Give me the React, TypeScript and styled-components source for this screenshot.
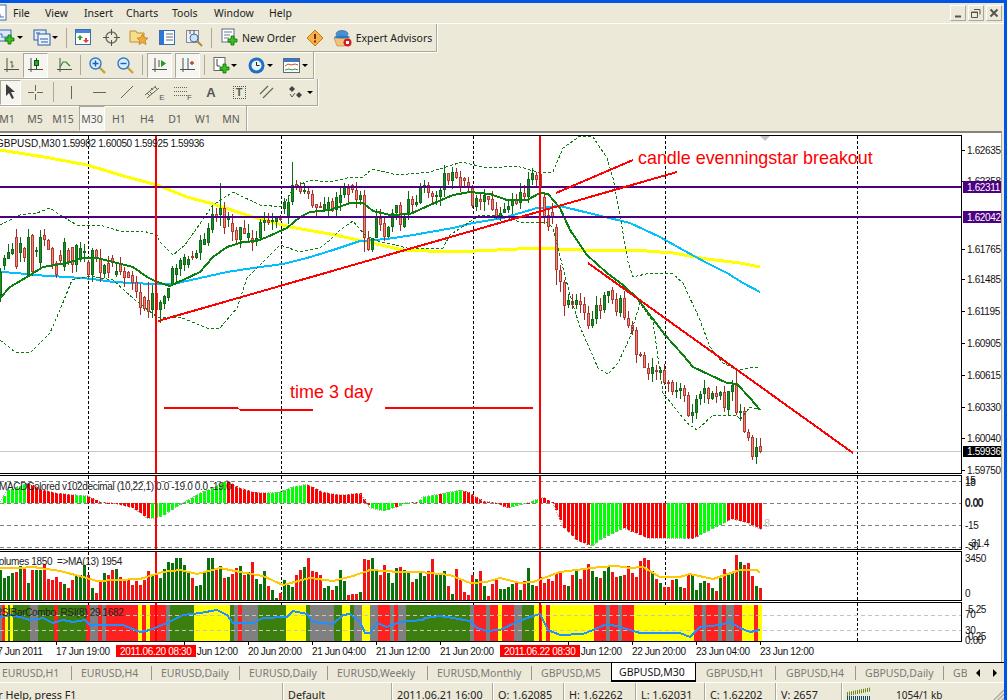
import React from "react";
import styled, { createGlobalStyle } from "styled-components";

const Global = createGlobalStyle`
  html, body {
    margin: 0;
    padding: 0;
    background: #ece9d8;
    overflow: hidden;
  }
`;

const UI_FONT = `"Noto Sans", "Liberation Sans", sans-serif`;
const CHART_FONT = `"Liberation Sans", Arial, sans-serif`;

const Frame = styled.div`
  width: 1007px;
  height: 700px;
  box-sizing: border-box;
  border-top: 3px solid #0055e5;
  border-right: 3px solid #0055e5;
  background: #ece9d8;
  display: flex;
  flex-direction: column;
  overflow: hidden;
  font-family: ${UI_FONT};
  font-size: 10.5px;
  color: #222;
`;

/* menu */
const MenuBar = styled.div`
  height: 20px;
  flex: none;
  display: flex;
  align-items: center;
  border-bottom: 1px solid #fff;
`;
const AppIcon = styled.div`
  width: 13px;
  height: 18px;
  overflow: hidden;
`;
const MenuItem = styled.div<{ $w: number }>`
  width: ${(p) => p.$w}px;
  font-size: 10.5px;
`;
const WindowButtons = styled.div`
  margin-left: auto;
  margin-right: 2px;
  display: flex;
  gap: 2px;
`;
const WindowButton = styled.div`
  width: 16px;
  height: 16px;
  box-sizing: border-box;
  border: 1px solid;
  border-color: #fff #aca899 #aca899 #fff;
  display: flex;
  align-items: center;
  justify-content: center;
`;

/* toolbars */
const ToolbarStack = styled.div`
  flex: none;
  display: flex;
  flex-direction: column;
`;
const Toolbar = styled.div<{ $w: number; $h: number; $last?: boolean }>`
  width: ${(p) => p.$w}px;
  height: ${(p) => p.$h}px;
  box-sizing: border-box;
  display: flex;
  align-items: center;
  border-right: 1px solid #aca899;
  border-bottom: ${(p) => (p.$last ? "0" : "1px solid #aca899")};
  box-shadow: 1px 0 0 #fff, ${(p) => (p.$last ? "0 0 0 transparent" : "0 1px 0 #fff")};
`;
const ToolButton = styled.div<{ $w: number; $ml?: number; $pressed?: boolean }>`
  width: ${(p) => p.$w}px;
  height: 25px;
  margin-left: ${(p) => p.$ml || 0}px;
  flex: none;
  box-sizing: border-box;
  display: flex;
  align-items: center;
  justify-content: center;
  ${(p) =>
    p.$pressed
      ? `background: #f6f5ef; border: 1px solid; border-color: #aca899 #fff #fff #aca899;`
      : ""}
`;
const Separator = styled.div<{ $ml: number }>`
  width: 1px;
  height: 20px;
  flex: none;
  margin-left: ${(p) => p.$ml}px;
  background: #aca899;
`;
const Caret = styled.div<{ $ml?: number }>`
  flex: none;
  width: 0;
  height: 0;
  margin-left: ${(p) => (p.$ml || 0) + 1}px;
  margin-right: 1px;
  border-left: 3px solid transparent;
  border-right: 3px solid transparent;
  border-top: 3px solid #000;
`;
const ToolText = styled.span`
  margin-left: 4px;
  font-size: 10.5px;
  white-space: nowrap;
`;
const TextButton = styled.div<{ $ml: number }>`
  display: flex;
  align-items: center;
  flex: none;
  margin-left: ${(p) => p.$ml}px;
`;
const Glyph = styled.span<{ $size: number; $weight?: number; $sub?: boolean }>`
  font-family: ${CHART_FONT};
  font-size: ${(p) => p.$size}px;
  font-weight: ${(p) => p.$weight || 400};
  color: #555;
  align-self: ${(p) => (p.$sub ? "flex-end" : "auto")};
  margin-bottom: ${(p) => (p.$sub ? "3px" : "0")};
`;
const TimeframeText = styled.span`
  color: #5c5c5c;
  font-size: 10.5px;
`;

/* chart */
const ChartBoard = styled.div`
  flex: none;
  width: 1002px;
  height: 531px;
  box-sizing: border-box;
  border-top: 2px solid #85837a;
  border-right: 1px solid #aca899;
  background: #fff;
  padding-top: 2px;
  display: flex;
  flex-direction: column;
`;
const Pane = styled.div<{ $mb?: number }>`
  display: flex;
  flex: none;
  margin-bottom: ${(p) => p.$mb || 0}px;
`;
const Plot = styled.div`
  width: 962px;
  box-sizing: border-box;
  border: 1px solid #000;
  border-left: 0;
  flex: none;
  display: flex;
`;
const ChartSvg = styled.svg`
  display: block;
  overflow: visible;
  font-family: ${CHART_FONT};
  font-size: 10px;
  letter-spacing: -0.35px;
  & polyline,
  & line,
  & rect {
    shape-rendering: crispEdges;
  }
`;

/* tabs */
const TabStrip = styled.div`
  flex: none;
  height: 20px;
  box-sizing: border-box;
  border-top: 1px solid #000;
  display: flex;
  align-items: center;
  position: relative;
`;
const Tab = styled.div<{ $w: number; $pad?: number; $active?: boolean }>`
  width: ${(p) => p.$w}px;
  flex: none;
  box-sizing: border-box;
  overflow: hidden;
  white-space: nowrap;
  color: ${(p) => (p.$active ? "#111" : "#7a7a7a")};
  ${(p) =>
    p.$active
      ? `background: #fff; height: 19px; line-height: 18px; margin-top: 0; align-self: flex-start;
         border: 1px solid #000; border-top: 0; border-bottom: 2px solid #000; padding-left: 7px;`
      : `height: 14px; line-height: 14px; padding-left: ${p.$pad ?? 9}px;`}
`;
const TabEdge = styled(Tab)`
  border-right: 1px solid #9a9890;
`;
const TabArrows = styled.div`
  margin-left: auto;
  margin-right: 7px;
  display: flex;
  gap: 13px;
`;
const ArrowLeft = styled.div`
  width: 0;
  height: 0;
  border-top: 4px solid transparent;
  border-bottom: 4px solid transparent;
  border-right: 4px solid #000;
`;
const ArrowRight = styled(ArrowLeft)`
  border-right: 0;
  border-left: 4px solid #000;
`;

/* status */
const StatusBar = styled.div`
  flex: none;
  height: 19px;
  box-sizing: border-box;
  border-top: 1px solid #fff;
  display: flex;
  align-items: flex-start;
  position: relative;
  font-size: 10.8px;
`;
const StatusCell = styled.div<{ $w: number; $flush?: boolean }>`
  width: ${(p) => p.$w}px;
  height: 18px;
  padding-top: 4px;
  padding-left: ${(p) => (p.$flush ? 0 : 5)}px;
  flex: none;
  box-sizing: border-box;
  line-height: 16px;
  white-space: nowrap;
  overflow: hidden;
  border-right: 1px solid #aca899;
  box-shadow: 1px 0 0 #fff;
`;
const ClippedText = styled.span`
  margin-left: -14px;
`;
const ConnectionBars = styled.div`
  width: 25px;
  height: 14px;
  margin: 4px 24px 0 5px;
  flex: none;
  display: flex;
`;
const KbText = styled.div`
  padding-top: 4px;
  line-height: 16px;
  font-size: 10px;
`;
const Grip = styled.svg`
  position: absolute;
  right: 0;
  bottom: 0;
`;

/* icons */
const Ico = styled.svg`
  display: block;
  flex: none;
  overflow: visible;
`;

const Plus = ({ x, y }: { x: number; y: number }) => (
  <path
    d={`M${x + 3} ${y}h3v3h3v3h-3v3h-3v-3h-3v-3h3z`}
    fill="#39c11a"
    stroke="#0c6b0c"
    strokeWidth="0.8"
  />
);

const Doc = ({ x = 1, y = 0 }: { x?: number; y?: number }) => (
  <g>
    <rect x={x} y={y} width="12" height="13" fill="#fff" stroke="#5a6a80" />
    <path d={`M${x + 2} ${y + 3}h8M${x + 2} ${y + 6}h6M${x + 2} ${y + 9}h5`} stroke="#6a7a90" />
  </g>
);

const NewChartIcon = () => (
  <Ico width="17" height="17" viewBox="0 0 17 17">
    <rect x="-3" y="1" width="14" height="11" fill="#dbe8fb" stroke="#3a6db0" />
    <path d="M-1 5h3v4M3 8h5" stroke="#3a6db0" fill="none" />
    <Plus x={5} y={6} />
  </Ico>
);
const ProfilesIcon = () => (
  <Ico width="18" height="17" viewBox="0 0 18 17">
    <rect x="1" y="1" width="12" height="10" fill="#e2edfb" stroke="#2d5c9e" />
    <rect x="5" y="5" width="12" height="11" fill="#eef4fd" stroke="#2d5c9e" />
    <path d="M3 4h4M7 10h8M8 13h7" stroke="#2d5c9e" />
  </Ico>
);
const MarketWatchIcon = () => (
  <Ico width="17" height="17" viewBox="0 0 17 17">
    <rect x="0.5" y="0.5" width="15" height="15" fill="#fff" stroke="#3a6db0" />
    <rect x="1" y="1" width="14" height="3" fill="#4a86d8" />
    <path d="M5 6l3 3h-2v2h-2v-2h-2z" fill="#2aa52a" />
    <path d="M11 14l-3-3h2v-2h2v2h2z" fill="#e2402a" />
  </Ico>
);
const CrosshairIcon = () => (
  <Ico width="17" height="17" viewBox="0 0 17 17">
    <circle cx="8.5" cy="8.5" r="5.5" fill="none" stroke="#6e6e66" strokeWidth="1.4" />
    <path d="M8.5 0v6M8.5 11v6M0 8.5h6M11 8.5h6" stroke="#55554e" />
  </Ico>
);
const FolderStarIcon = () => (
  <Ico width="19" height="17" viewBox="0 0 19 17">
    <path d="M0 2h6l1 2h7v9H0z" fill="#f8dd8c" stroke="#b6923a" />
    <path d="M12.5 5l1.7 3.6 3.8.5-2.8 2.6.8 3.8-3.5-1.9-3.5 1.9.8-3.8-2.8-2.6 3.8-.5z" fill="#f2a93c" stroke="#b47a1c" strokeWidth="0.7" />
  </Ico>
);
const NavigatorIcon = () => (
  <Ico width="16" height="16" viewBox="0 0 16 16">
    <rect x="0.5" y="0.5" width="15" height="14" fill="#fff" stroke="#3a6db0" />
    <rect x="1" y="1" width="4" height="13" fill="#2a78d8" />
    <path d="M7 4h7M7 7h7M7 10h7" stroke="#5a6a80" />
  </Ico>
);
const TesterIcon = () => (
  <Ico width="18" height="18" viewBox="0 0 18 18">
    <rect x="0.5" y="1.5" width="12" height="12" fill="#eef0f4" stroke="#8a8a94" />
    <circle cx="8" cy="9" r="4" fill="#cfe2fa" stroke="#3a6db0" />
    <path d="M11 12l5 5" stroke="#b08a3a" strokeWidth="2" />
    <path d="M4 1v4M8 1v4" stroke="#555" />
  </Ico>
);
const NewOrderIcon = () => (
  <Ico width="17" height="17" viewBox="0 0 17 17">
    <Doc x={1} y={0} />
    <Plus x={7} y={7} />
  </Ico>
);
const WarningIcon = () => (
  <Ico width="16" height="16" viewBox="0 0 16 16">
    <path d="M8 0l8 8-8 8-8-8z" fill="#f6b04a" stroke="#c67a1a" />
    <path d="M7 4h2v5H7zM7 10.5h2v2H7z" fill="#7a2a10" />
  </Ico>
);
const ExpertIcon = () => (
  <Ico width="18" height="18" viewBox="0 0 18 18">
    <path d="M0 9h15l1 5-6 3H3z" fill="#f3c27a" stroke="#b08040" strokeWidth="0.6" />
    <ellipse cx="8" cy="5" rx="6" ry="3.5" fill="#4a90cf" stroke="#2a5d8f" strokeWidth="0.6" />
    <ellipse cx="8" cy="8" rx="8" ry="1.5" fill="#2a78c8" />
    <circle cx="13.5" cy="13.5" r="4" fill="#d81f1f" />
    <rect x="12" y="12" width="3" height="3" fill="#fff" />
  </Ico>
);
const Axes = () => <path d="M3 0v14M0 11.5h15" stroke="#50504a" fill="none" />;
const BarChartIcon = () => (
  <Ico width="15" height="15" viewBox="0 0 15 15">
    <Axes />
    <path d="M8 3v7M6 4h2M8 8h2" stroke="#5c6b3a" fill="none" />
  </Ico>
);
const CandleIcon = () => (
  <Ico width="15" height="15" viewBox="0 0 15 15">
    <Axes />
    <path d="M8.5 0v11" stroke="#0c5a0c" />
    <rect x="6.5" y="2.5" width="4" height="5" fill="#2aa52a" stroke="#0c5a0c" />
  </Ico>
);
const LineIcon = () => (
  <Ico width="15" height="15" viewBox="0 0 15 15">
    <Axes />
    <path d="M3 9l3-5h3l4 4" stroke="#2a8a2a" strokeWidth="1.2" fill="none" />
  </Ico>
);
const ZoomIcon = ({ plus }: { plus?: boolean }) => (
  <Ico width="17" height="17" viewBox="0 0 17 17">
    <path d="M10 10l6 6" stroke="#c8a23a" strokeWidth="2.4" />
    <circle cx="6.5" cy="6.5" r="5.5" fill="#d6ebff" stroke="#2f7bc8" strokeWidth="1.4" />
    <path d={plus ? "M3.5 6.5h6M6.5 3.5v6" : "M3.5 6.5h6"} stroke="#1f5fa8" strokeWidth="1.4" />
  </Ico>
);
const AutoScrollIcon = () => (
  <Ico width="15" height="15" viewBox="0 0 15 15">
    <Axes />
    <path d="M7 2v7" stroke="#50504a" />
    <path d="M9 2l5 3.5L9 9z" fill="#1f9a1f" />
  </Ico>
);
const ShiftIcon = () => (
  <Ico width="15" height="15" viewBox="0 0 15 15">
    <Axes />
    <path d="M8 0v11" stroke="#1f5fa8" />
    <path d="M10 5h4M12 3v4" stroke="#b8401f" strokeWidth="1.4" />
  </Ico>
);
const IndicatorIcon = () => (
  <Ico width="17" height="17" viewBox="0 0 17 17">
    <rect x="1" y="0.5" width="11" height="13" fill="#fff" stroke="#6a6a62" />
    <path d="M4 2v7h3" stroke="#444" fill="none" />
    <Plus x={7} y={7} />
  </Ico>
);
const ClockIcon = () => (
  <Ico width="17" height="17" viewBox="0 0 17 17">
    <circle cx="8.5" cy="8.5" r="8" fill="#1f6fc8" />
    <circle cx="8.5" cy="8.5" r="5" fill="#eef4fb" />
    <path d="M8.5 5v3.5h3" stroke="#222" fill="none" />
  </Ico>
);
const TemplateIcon = () => (
  <Ico width="17" height="15" viewBox="0 0 17 15">
    <rect x="0.5" y="0.5" width="16" height="14" fill="#fff" stroke="#5a6a80" />
    <rect x="1" y="1" width="15" height="3" fill="#3a78c8" />
    <path d="M2 8l3-2 3 1 4-1 3 1" stroke="#d04a2a" fill="none" />
    <path d="M2 12l4-1 3 1 3-1 3 1" stroke="#2a9a2a" fill="none" />
  </Ico>
);
const CursorIcon = () => (
  <Ico width="12" height="16" viewBox="0 0 12 16">
    <path d="M1 0l9 8H6l3 6-2 1-3-6-3 3z" fill="#3c3c3c" />
  </Ico>
);
const draw = "#66665e";
const CrossIcon = () => (
  <Ico width="15" height="15" viewBox="0 0 15 15">
    <path d="M7.5 0v6M7.5 9v6M0 7.5h6M9 7.5h6" stroke={draw} />
  </Ico>
);
const VLineIcon = () => (
  <Ico width="3" height="13" viewBox="0 0 3 13">
    <path d="M1.5 0v13" stroke={draw} />
  </Ico>
);
const HLineIcon = () => (
  <Ico width="13" height="3" viewBox="0 0 13 3">
    <path d="M0 1.5h13" stroke={draw} />
  </Ico>
);
const TrendIcon = () => (
  <Ico width="14" height="14" viewBox="0 0 14 14">
    <path d="M1 13L13 1" stroke={draw} />
  </Ico>
);
const ChannelIcon = () => (
  <Ico width="14" height="15" viewBox="0 0 14 15">
    <path d="M0 10L11 1M2 13L14 3M6 3l2 2M4 6l3 3M2 8l3 3M10 2l2 2" stroke={draw} fill="none" />
  </Ico>
);
const FiboIcon = () => (
  <Ico width="13" height="13" viewBox="0 0 13 13">
    <path d="M0 1.5h13M0 5.5h13M0 9.5h13" stroke={draw} strokeDasharray="1 1" />
  </Ico>
);
const ParallelIcon = () => (
  <Ico width="14" height="14" viewBox="0 0 14 14">
    <path d="M0 9L8 1M3 13L13 3" stroke={draw} strokeWidth="1.2" />
  </Ico>
);
const ArrowsIcon = () => (
  <Ico width="15" height="15" viewBox="0 0 15 15">
    <path d="M4 1l3 3-3 3-3-3z" fill="#444" />
    <path d="M11 7l3 3-3 3-3-3z" fill="#444" />
    <path d="M2 9l2 3 3-4" stroke="#555" fill="none" />
  </Ico>
);
const TextBoxIcon = styled.div`
  width: 11px;
  height: 11px;
  border: 1px dotted #555;
  display: flex;
  align-items: center;
  justify-content: center;
`;

/* chart data */
type Path = number[][];

const at = (path: Path, x: number) => {
  if (x <= path[0][0]) return path[0][1];
  for (let i = 1; i < path.length; i++) {
    if (x <= path[i][0]) {
      const [x0, y0] = path[i - 1];
      const [x1, y1] = path[i];
      return y0 + ((y1 - y0) * (x - x0)) / (x1 - x0);
    }
  }
  return path[path.length - 1][1];
};
const noise = (i: number, s: number) => {
  const v = Math.sin(i * 12.9898 + s * 78.233) * 43758.5453;
  return v - Math.floor(v);
};
const pts = (p: Path) => p.map((q) => q.join(",")).join(" ");

const BARS: number[] = [];
for (let x = -4; x <= 760; x += 4) BARS.push(x);

const PRICE: Path = [
  [0, 268], [10, 252], [20, 248], [30, 255], [40, 248], [50, 248], [60, 258], [70, 255], [85, 252], [100, 252],
  [110, 258], [120, 268], [136, 282], [140, 302], [150, 305], [156, 302], [162, 305], [170, 285], [180, 265],
  [190, 262], [200, 248], [210, 232], [220, 212], [232, 225], [240, 233], [252, 238], [262, 228], [275, 222],
  [290, 195], [300, 190], [310, 198], [320, 208], [336, 205], [345, 192], [355, 190], [362, 205], [375, 248],
  [380, 238], [385, 225], [400, 215], [405, 205], [415, 192], [430, 198], [445, 178], [455, 175], [465, 190],
  [475, 187], [495, 202], [502, 213], [515, 208], [530, 195], [535, 177], [545, 185], [548, 202], [553, 218],
  [557, 248], [561, 275], [565, 292], [570, 303], [580, 302], [585, 308], [590, 320], [595, 312], [605, 298],
  [612, 295], [620, 305], [625, 305], [632, 322], [637, 343], [644, 363], [650, 370], [660, 372], [665, 377],
  [672, 387], [680, 390], [685, 400], [692, 407], [697, 397], [705, 392], [712, 395], [720, 393], [727, 400],
  [737, 400], [742, 413], [746, 422], [750, 435], [753, 447], [757, 452], [760, 449],
];

type Candle = { h: number; o: number; c: number; l: number };
const CANDLE_FIX: Record<number, Candle> = {
  148: { h: 282, o: 300, c: 312, l: 318 },
  152: { h: 285, o: 310, c: 293, l: 318 },
  156: { h: 288, o: 293, c: 310, l: 322 },
  160: { h: 300, o: 310, c: 302, l: 323 },
  220: { h: 183, o: 215, c: 208, l: 226 },
  292: { h: 162, o: 202, c: 185, l: 205 },
  364: { h: 190, o: 195, c: 238, l: 252 },
  556: { h: 224, o: 227, c: 270, l: 285 },
  560: { h: 265, o: 270, c: 282, l: 292 },
  564: { h: 280, o: 282, c: 306, l: 316 },
  636: { h: 327, o: 330, c: 355, l: 363 },
  736: { h: 370, o: 385, c: 413, l: 415 },
  752: { h: 435, o: 437, c: 457, l: 460 },
  756: { h: 438, o: 457, c: 447, l: 464 },
  760: { h: 438, o: 446, c: 452, l: 453 },
};

/* x, body top, body bottom, 1 = falling bar */
const BODIES: number[][] = [
  [0, 272, 295, 0], [16, 237, 267, 1], [24, 248, 258, 1], [28, 237, 275, 0], [32, 235, 272, 1], [40, 237, 263, 0],
  [44, 235, 240, 1], [48, 240, 250, 1], [52, 248, 265, 1], [56, 263, 275, 1], [64, 242, 267, 0], [72, 247, 265, 1],
  [76, 245, 265, 0], [88, 262, 275, 1], [92, 250, 275, 0], [96, 250, 258, 1], [100, 258, 273, 1], [104, 265, 274, 0],
  [108, 263, 273, 1], [116, 271, 275, 0], [124, 271, 278, 1], [136, 282, 292, 1], [140, 292, 308, 1], [168, 288, 298, 0],
  [172, 268, 285, 0], [176, 268, 275, 0], [184, 257, 265, 0], [192, 256, 258, 1], [196, 253, 258, 0], [200, 240, 253, 0],
  [208, 228, 243, 0], [212, 214, 230, 0], [216, 214, 217, 1], [224, 208, 228, 1], [228, 217, 220, 0], [232, 223, 232, 1],
  [236, 230, 240, 1], [240, 227, 240, 0], [244, 228, 234, 1], [248, 233, 238, 0], [252, 238, 243, 1], [256, 238, 241, 0],
  [260, 222, 238, 0], [264, 220, 223, 0], [268, 220, 223, 1], [272, 220, 222, 0], [276, 217, 222, 0], [280, 218, 220, 1],
  [288, 202, 217, 0], [296, 184, 188, 1], [300, 187, 192, 1], [304, 190, 192, 0], [308, 191, 194, 1], [312, 194, 206, 1],
  [316, 204, 208, 1], [320, 206, 208, 1], [336, 197, 210, 0], [344, 187, 195, 0], [352, 185, 190, 1], [356, 190, 200, 1],
  [360, 195, 200, 0], [368, 238, 250, 1], [372, 238, 250, 0], [376, 217, 238, 0], [380, 218, 225, 1], [384, 223, 237, 1],
  [388, 227, 237, 0], [392, 213, 227, 0], [396, 205, 213, 0], [400, 205, 225, 1], [404, 217, 227, 0], [408, 199, 213, 0],
  [412, 199, 205, 1], [416, 202, 205, 0], [420, 187, 203, 0], [424, 185, 188, 0], [428, 185, 193, 1], [432, 193, 197, 1],
  [436, 195, 197, 0], [440, 190, 197, 0], [444, 173, 190, 0], [448, 173, 181, 1], [452, 172, 181, 0], [456, 172, 178, 1],
  [464, 178, 181, 1], [468, 182, 188, 1], [472, 188, 206, 1], [476, 198, 207, 0], [480, 199, 202, 1], [484, 195, 202, 0],
  [488, 196, 200, 1], [492, 199, 210, 1], [496, 209, 218, 1], [500, 213, 218, 0], [504, 209, 213, 0], [508, 206, 210, 0],
  [512, 200, 206, 0], [516, 200, 204, 1], [520, 192, 203, 0], [524, 193, 197, 1], [528, 179, 197, 0], [532, 173, 180, 0],
  [536, 175, 180, 1], [540, 174, 188, 1], [544, 197, 217, 1], [548, 215, 227, 1], [568, 300, 305, 0], [572, 301, 305, 1],
  [576, 300, 305, 0], [580, 301, 305, 1], [584, 304, 313, 1], [588, 313, 326, 1], [592, 319, 326, 0], [596, 305, 319, 0],
  [600, 305, 311, 1], [604, 295, 310, 0], [608, 291, 296, 0], [612, 290, 300, 1], [616, 299, 312, 1], [620, 298, 313, 0],
  [624, 298, 318, 1], [628, 318, 326, 1], [632, 325, 331, 1], [640, 354, 356, 1], [644, 355, 368, 1], [648, 368, 374, 1],
  [652, 367, 374, 0], [656, 370, 372, 1], [660, 370, 373, 0], [664, 370, 383, 1], [668, 382, 384, 1], [672, 382, 392, 1],
  [676, 390, 392, 0], [680, 388, 391, 0], [684, 388, 396, 1], [688, 395, 416, 1], [692, 412, 416, 0], [696, 399, 413, 0],
  [700, 394, 399, 0], [704, 388, 394, 0], [708, 388, 399, 1], [712, 393, 399, 0], [716, 393, 397, 1], [720, 392, 396, 0],
  [724, 392, 408, 1], [728, 391, 410, 0], [732, 385, 392, 0], [740, 411, 413, 0], [744, 411, 432, 1], [748, 432, 438, 1],
];
const BODY_BY_X: Record<number, number[]> = {};
BODIES.forEach((b) => (BODY_BY_X[b[0]] = b));

const CANDLES = BARS.map((x, i) => {
  const fixed = CANDLE_FIX[x];
  if (fixed) return { x, ...fixed };
  const body = BODY_BY_X[x];
  let o: number;
  let c: number;
  if (body) {
    o = body[3] ? body[1] : body[2];
    c = body[3] ? body[2] : body[1];
  } else {
    const mid = at(PRICE, x);
    const size = 1 + noise(i, 1) * 5;
    const down = at(PRICE, x) - at(PRICE, x - 4) + (noise(i, 2) - 0.5) * 7 > 0;
    o = mid + (down ? -size : size);
    c = mid + (down ? size : -size);
  }
  return {
    x,
    o,
    c,
    h: Math.min(o, c) - noise(i, 3) * 9,
    l: Math.max(o, c) + noise(i, 4) * 9,
  };
});

const BB_UPPER: Path = [
  [0, 225], [20, 215], [37, 213], [50, 208], [60, 215], [77, 225], [100, 225], [123, 232], [143, 231], [157, 235],
  [160, 242], [173, 255], [185, 245], [213, 205], [233, 192], [260, 205], [283, 207], [293, 188], [310, 180], [330, 182],
  [347, 178], [363, 177], [372, 169], [397, 175], [430, 172], [462, 162], [487, 168], [517, 166], [537, 172], [553, 172],
  [563, 148], [580, 136], [593, 137], [607, 158], [613, 178], [620, 215], [628, 262], [633, 277], [650, 273], [673, 274],
  [683, 283], [700, 320], [710, 347], [723, 363], [737, 370], [750, 368], [760, 367],
];
const BB_LOWER: Path = [
  [0, 340], [15, 352], [30, 353], [50, 333], [62, 305], [72, 280], [90, 276], [113, 280], [135, 300], [157, 317], [180, 317],
  [207, 328], [220, 328], [237, 308], [247, 278], [267, 258], [280, 245], [300, 252], [320, 248], [330, 240], [340, 230],
  [353, 221], [365, 235], [378, 241], [407, 248], [443, 248], [450, 235], [480, 215], [500, 215], [520, 222], [547, 222],
  [553, 228], [563, 268], [570, 295], [580, 327], [598, 368], [608, 374], [618, 363], [630, 337], [640, 303], [653, 322],
  [663, 393], [687, 423], [697, 430], [713, 415], [737, 415], [740, 420], [750, 407], [760, 410],
];
const MA_GREEN: Path = [
  [0, 298], [10, 287], [27, 277], [43, 267], [67, 263], [83, 258], [97, 258], [113, 262], [133, 267], [147, 277], [157, 282],
  [170, 286], [183, 280], [200, 272], [213, 257], [227, 247], [243, 242], [257, 241], [267, 237], [287, 228], [300, 217],
  [310, 212], [330, 210], [350, 203], [363, 203], [373, 211], [390, 215], [410, 214], [430, 205], [453, 195], [470, 192],
  [490, 194], [507, 200], [527, 200], [540, 193], [548, 194], [560, 208], [570, 230], [587, 255], [607, 273], [623, 285],
  [637, 298], [665, 335], [683, 355], [693, 367], [710, 375], [727, 383], [737, 384], [750, 398], [760, 410],
];
const MA_BLUE: Path = [
  [0, 272], [17, 273], [33, 275], [67, 277], [93, 279], [113, 282], [153, 284], [173, 284], [200, 278], [227, 272], [253, 268],
  [283, 264], [307, 258], [330, 251], [360, 241], [387, 239], [413, 235], [453, 228], [473, 223], [503, 218], [537, 208],
  [560, 206], [597, 215], [630, 223], [660, 237], [683, 250], [707, 263], [727, 273], [743, 283], [760, 292],
];
const MA_YELLOW: Path = [
  [0, 150], [50, 158], [87, 165], [127, 177], [157, 185], [187, 197], [213, 204], [253, 217], [290, 227], [330, 234], [363, 241],
  [403, 250], [453, 252], [497, 250], [537, 248], [580, 250], [647, 251], [673, 253], [707, 259], [740, 263], [760, 267],
];

const MACD: Path = [
  [-4, 505], [0, 503], [7, 490], [17, 487], [28, 483], [43, 490], [57, 493], [77, 495], [88, 496], [100, 502], [113, 503], [133, 508],
  [147, 518], [157, 518], [167, 513], [183, 503], [200, 493], [213, 488], [227, 480], [237, 487], [253, 492], [267, 493], [280, 492],
  [293, 487], [307, 484], [323, 492], [340, 495], [360, 493], [370, 508], [383, 511], [397, 507], [405, 503], [418, 502], [422, 497],
  [440, 494], [460, 490], [470, 493], [483, 501], [497, 503], [507, 508], [527, 503], [543, 497], [553, 503], [563, 527], [577, 541],
  [592, 546], [603, 538], [623, 528], [647, 538], [673, 538], [693, 539], [713, 528], [733, 519], [747, 523], [762, 530],
];
const MACD_GREEN: Path = [
  [-4, 28], [73, 88], [150, 227], [267, 307], [370, 395], [400, 412], [418, 440], [443, 463], [510, 528], [530, 538], [591, 622], [666, 685], [697, 727],
];

const VOL_MA: Path = [
  [0, 568], [20, 568], [33, 567], [60, 571], [83, 577], [97, 581], [117, 580], [140, 579], [163, 572], [180, 570], [197, 574], [220, 568],
  [240, 572], [263, 576], [283, 585], [310, 578], [333, 581], [353, 576], [370, 570], [400, 572], [420, 572], [450, 575], [470, 583],
  [486, 582], [500, 578], [520, 583], [533, 582], [560, 572], [600, 567], [617, 566], [630, 568], [643, 567], [660, 577], [680, 577],
  [690, 574], [713, 579], [740, 570], [757, 570], [760, 573],
];
const VOL_FIX: Record<number, number> = {
  208: 558, 212: 558, 276: 598, 272: 590, 268: 586, 308: 558, 364: 559, 368: 560, 376: 570,
  456: 569, 464: 592, 468: 595, 472: 575, 736: 555, 740: 562, 744: 565, 760: 588,
};

const G = "#3c7f0e";
const A = "#808080";
const R = "#ff2020";
const Y = "#ffff00";
const RSI_BANDS: Array<[number, number, string]> = [
  [0, 2, A], [2, 5, R], [5, 8, Y], [8, 10, G], [10, 13, Y], [13, 30, G], [30, 38, A], [38, 54, G], [54, 58, R], [58, 86, G], [86, 90, R],
  [90, 98, A], [98, 102, R], [102, 106, A], [106, 138, R], [138, 142, Y], [142, 146, R], [146, 150, Y], [150, 166, R], [166, 170, A],
  [170, 194, G], [194, 230, Y], [230, 234, G], [234, 238, A], [238, 242, R], [242, 258, A], [258, 286, G], [286, 306, Y], [306, 310, G],
  [310, 334, A], [334, 342, G], [342, 350, Y], [350, 354, G], [354, 362, A], [362, 370, Y], [370, 378, A], [378, 390, R], [390, 394, A],
  [394, 398, R], [398, 406, A], [406, 470, G], [470, 474, A], [474, 486, R], [486, 490, A], [490, 498, R], [498, 502, Y], [502, 514, R],
  [514, 522, A], [522, 534, G], [534, 539, Y], [539, 542, R], [542, 546, Y], [546, 550, R], [550, 594, Y], [594, 606, R], [606, 610, A],
  [610, 618, R], [618, 622, A], [622, 634, R], [634, 694, Y], [694, 702, R], [702, 706, A], [706, 718, R], [718, 722, A], [722, 726, R],
  [726, 734, A], [734, 742, R], [742, 754, Y], [754, 758, R], [758, 762, Y],
];

const RSI_LINE: Path = [
  [0, 617], [10, 615], [20, 617], [30, 620], [43, 618], [53, 623], [63, 620], [73, 622], [85, 620], [90, 625], [123, 625], [140, 632],
  [150, 630], [157, 627], [167, 623], [183, 615], [200, 613], [217, 610], [227, 615], [233, 623], [253, 623], [263, 618], [287, 617],
  [293, 611], [307, 614], [313, 622], [333, 624], [343, 615], [350, 614], [360, 622], [365, 633], [370, 633], [377, 623], [387, 627],
  [400, 622], [423, 620], [424, 619], [425, 618], [440, 616], [453, 618], [470, 621], [477, 628], [487, 631], [497, 630], [500, 630],
  [517, 622], [530, 617], [540, 614], [548, 630], [560, 635], [583, 634], [593, 630], [607, 624], [620, 627], [640, 633], [680, 633],
  [690, 637], [700, 627], [720, 625], [730, 622], [740, 628], [750, 632], [760, 630],
];

const GRID_X = [88, 281, 473, 665, 857];
const RED_X = [156, 540];
const RED_LINE = "#ff0000";

const GridLines = ({ top, bottom }: { top: number; bottom: number }) => (
  <g>
    {GRID_X.map((x) => (
      <line key={x} x1={x} x2={x} y1={top} y2={bottom} stroke="#000" strokeDasharray="3 2" />
    ))}
  </g>
);
const RedVerticals = ({ top, bottom }: { top: number; bottom: number }) => (
  <g>
    {RED_X.map((x) => (
      <line key={x} x1={x} x2={x} y1={top} y2={bottom} stroke={RED_LINE} strokeWidth="2" />
    ))}
  </g>
);

const MainPlot = () => (
  <ChartSvg width="961" height="337" viewBox="0 136 961 337">
    <GridLines top={136} bottom={473} />
    <line x1="0" x2="961" y1="451.5" y2="451.5" stroke="#c8c8c8" />
    <polygon points="760,136 770,136 765,141" fill="#c4c4c4" />
    <polyline points={pts(MA_YELLOW)} fill="none" stroke="#ffff00" strokeWidth="3" />
    <polyline points={pts(MA_BLUE)} fill="none" stroke="#00bfff" strokeWidth="2" />
    {CANDLES.map((k) => {
      const down = k.c > k.o;
      const top = Math.round(Math.min(k.o, k.c));
      const h = Math.max(2, Math.round(Math.abs(k.c - k.o)));
      return (
        <g key={k.x}>
          <line x1={k.x + 0.5} x2={k.x + 0.5} y1={k.h} y2={k.l} stroke={down ? "#a52a2a" : "#0c6b14"} />
          <rect x={k.x - 1} y={top} width="3" height={h} fill={down ? "#b03a34" : "#0c6b14"} />
          {h > 2 && <rect x={k.x} y={top + 1} width="1" height={h - 2} fill={down ? "#f08a78" : "#1f8a2a"} />}
        </g>
      );
    })}
    <polyline points={pts(BB_UPPER)} fill="none" stroke="#0a7a0a" strokeDasharray="3 2" />
    <polyline points={pts(BB_LOWER)} fill="none" stroke="#0a7a0a" strokeDasharray="3 2" />
    <polyline points={pts(MA_GREEN)} fill="none" stroke="#0a800f" strokeWidth="2" />
    <line x1="0" x2="961" y1="187" y2="187" stroke="#4b0082" strokeWidth="2" />
    <line x1="0" x2="961" y1="217" y2="217" stroke="#4b0082" strokeWidth="2" />
    <RedVerticals top={136} bottom={473} />
    <line x1="158" y1="321" x2="677" y2="172" stroke={RED_LINE} strokeWidth="2" />
    <line x1="556" y1="193" x2="633" y2="160" stroke={RED_LINE} strokeWidth="2" />
    <line x1="588" y1="263" x2="853" y2="453" stroke={RED_LINE} strokeWidth="2" />
    <polyline points="164,408 238,408 240,410 313,410" fill="none" stroke={RED_LINE} strokeWidth="1.4" />
    <line x1="385" y1="407.5" x2="533" y2="407.5" stroke={RED_LINE} strokeWidth="2" />
    <text x="-4" y="147" fill="#111" letterSpacing="0">GBPUSD,M30</text>
    <text x="62" y="147" fill="#111">1.59982 1.60050 1.59925 1.59936</text>
    <text x="290" y="398" fill={RED_LINE} fontSize="18" letterSpacing="0">time 3 day</text>
    <text x="638" y="164" fill={RED_LINE} fontSize="17.9" letterSpacing="0">candle evenningstar breakout</text>
  </ChartSvg>
);

const MainAxis = () => (
  <ChartSvg width="39" height="339" viewBox="962 135 39 339">
    {[
      [150, "1.62635"], [181, "1.62358"], [249, "1.61765"], [279, "1.61485"], [311, "1.61195"], [343, "1.60905"],
      [375, "1.60615"], [407, "1.60330"], [438, "1.60040"], [470, "1.59750"],
    ].map(([y, t]) => (
      <g key={t as string}>
        <line x1="962" x2="965" y1={y as number} y2={y as number} stroke="#000" />
        <text x="967" y={(y as number) + 3.5} fill="#111">{t}</text>
      </g>
    ))}
    <rect x="963" y="181" width="38" height="12" fill="#4b0082" />
    <text x="967" y="190.5" fill="#fff">1.62311</text>
    <rect x="963" y="211" width="38" height="12" fill="#4b0082" />
    <text x="967" y="220.5" fill="#fff">1.62042</text>
    <rect x="963" y="446" width="38" height="11" fill="#000" />
    <text x="967" y="455" fill="#fff">1.59936</text>
  </ChartSvg>
);

const inGreen = (x: number) => MACD_GREEN.some(([a, b]) => x >= a && x < b);

const MacdPlot = () => (
  <ChartSvg width="961" height="73" viewBox="0 476 961 73">
    <GridLines top={476} bottom={549} />
    {[481, 503, 525, 547].map((y) => (
      <line key={y} x1="0" x2="961" y1={y} y2={y} stroke="#808080" strokeDasharray="4 3" />
    ))}
    {BARS.map((x) => {
      const tip = Math.round(at(MACD, x));
      const y = Math.min(tip, 503);
      return (
        <rect key={x} x={x - 1} y={y} width="3" height={Math.max(1, Math.abs(tip - 503))} fill={inGreen(x) ? "#00ff00" : "#ff0000"} />
      );
    })}
    <polyline points={pts(MACD)} fill="none" stroke="#b0b0b0" strokeDasharray="1 1" />
    <RedVerticals top={476} bottom={549} />
    <text x="764" y="527" fill="#bbb" fontSize="11">8</text>
    <text x="-1" y="490" fill="#222">MACDColored v102decimal (10,22,1) 0.0 -19.0 0.0 -19.0</text>
  </ChartSvg>
);

const MacdAxis = () => (
  <ChartSvg width="39" height="75" viewBox="962 475 39 75">
    {[
      [484, "15"], [486, "18"], [506, "0.00"], [506.5, "0.00"], [529, "-15"], [547, "-31.4"], [550, "-30"],
    ].map(([y, t], i) => (
      <text key={i} x={i === 5 ? 968 : 965} y={y as number} fill="#111">{t}</text>
    ))}
  </ChartSvg>
);

const VolumePlot = () => (
  <ChartSvg width="961" height="48" viewBox="0 552 961 48">
    <GridLines top={552} bottom={600} />
    {CANDLES.map((k, i) => {
      if (k.x < 0) return null;
      const spread = (noise(i, 7) + noise(i + 1, 7)) / 2 - 0.45;
      const tip = Math.round(VOL_FIX[k.x] ?? Math.max(558, Math.min(597, at(VOL_MA, k.x) + spread * 36)));
      return <rect key={k.x} x={k.x - 1} y={tip} width="3" height={600 - tip} fill={k.c > k.o ? "#f01414" : "#0b720b"} />;
    })}
    <RedVerticals top={552} bottom={600} />
    <polyline points={pts(VOL_MA)} fill="none" stroke="#ffc800" strokeWidth="2" />
    <text x="-7" y="565" fill="#222">{"Volumes 1850\u00a0 =>MA(13) 1954"}</text>
  </ChartSvg>
);

const VolumeAxis = () => (
  <ChartSvg width="39" height="50" viewBox="962 551 39 50">
    <text x="965" y="562" fill="#111">3450</text>
    <text x="965" y="597" fill="#111">0</text>
  </ChartSvg>
);

const RsiPlot = () => (
  <ChartSvg width="961" height="38" viewBox="0 603 961 38">
    <GridLines top={603} bottom={641} />
    {RSI_BANDS.map(([a, b, c]) => (
      <rect key={a} x={a} y="605" width={b - a} height="36" fill={c} />
    ))}
    {[615, 630].map((y) => (
      <line key={y} x1="0" x2="961" y1={y} y2={y} stroke="#c4c4c4" strokeDasharray="4 3" />
    ))}
    <RedVerticals top={603} bottom={641} />
    <polyline points={pts(RSI_LINE)} fill="none" stroke="#1e90ff" strokeWidth="2" />
    <text x="-5" y="616" fill="#222">{"RSIBarCombo\u00a0 RSI(8) 29.1682"}</text>
  </ChartSvg>
);

const RsiAxis = () => (
  <ChartSvg width="39" height="40" viewBox="962 602 39 40">
    {[
      [613, "5.25", 968], [618, "70", 965], [634, "30", 965], [640, "0.25", 968], [644, "0.00", 965],
    ].map(([y, t, x]) => (
      <text key={t as string} x={x as number} y={y as number} fill="#111">{t}</text>
    ))}
  </ChartSvg>
);

const TIME_LABELS: Array<[number, string]> = [
  [-8, "17 Jun 2011"], [56, "17 Jun 19:00"], [184, "20 Jun 12:00"], [248, "20 Jun 20:00"], [312, "21 Jun 04:00"], [376, "21 Jun 12:00"],
  [440, "21 Jun 20:00"], [568, "22 Jun 12:00"], [632, "22 Jun 20:00"], [696, "23 Jun 04:00"], [760, "23 Jun 12:00"],
];

const TimeAxis = () => (
  <ChartSvg width="1001" height="20" viewBox="0 0 1001 20">
    {TIME_LABELS.map(([x, t]) => (
      <g key={t}>
        <line x1={x + 0.5} x2={x + 0.5} y1="0" y2="3" stroke="#000" />
        <text x={x} y="13" fill="#111">{t}</text>
      </g>
    ))}
    {[
      [116, "2011.06.20 08:30"],
      [500, "2011.06.22 08:30"],
    ].map(([x, t]) => (
      <g key={t as string}>
        <rect x={x as number} y="3" width="80" height="12" fill="#ff0000" />
        <text x={(x as number) + 4} y="13" fill="#fff">{t}</text>
      </g>
    ))}
  </ChartSvg>
);

const WindowGlyph = ({ d, w = 1.6 }: { d: string; w?: number }) => (
  <Ico width="12" height="12" viewBox="0 0 12 12">
    <path d={d} stroke="#55554e" strokeWidth={w} fill="none" />
  </Ico>
);

const BAR_COUNT = 12;

const App = () => {
  return (
    <Frame>
      <Global />
      <MenuBar>
        <AppIcon>
          <Ico width="7" height="18" viewBox="0 0 7 18">
            <rect x="-5" y="1" width="11" height="15" fill="#fff" stroke="#3a6db0" />
            <path d="M-3 10h3v3h4" stroke="#3a6db0" fill="none" />
          </Ico>
        </AppIcon>
        <MenuItem $w={32}>File</MenuItem>
        <MenuItem $w={39}>View</MenuItem>
        <MenuItem $w={42}>Insert</MenuItem>
        <MenuItem $w={46}>Charts</MenuItem>
        <MenuItem $w={42}>Tools</MenuItem>
        <MenuItem $w={55}>Window</MenuItem>
        <MenuItem $w={40}>Help</MenuItem>
        <WindowButtons>
          <WindowButton>
            <WindowGlyph d="M3 9.5h6" w={2} />
          </WindowButton>
          <WindowButton>
            <WindowGlyph d="M4 2.5h6v5M1.5 5h6v5.5h-6zM1.5 5.5h6" w={1} />
          </WindowButton>
          <WindowButton>
            <WindowGlyph d="M2.5 2.5l7 7M9.5 2.5l-7 7" w={2} />
          </WindowButton>
        </WindowButtons>
      </MenuBar>

      <ToolbarStack>
        <Toolbar $w={437} $h={28}>
          <ToolButton $w={16}><NewChartIcon /></ToolButton>
          <Caret />
          <ToolButton $w={19} $ml={8}><ProfilesIcon /></ToolButton>
          <Caret />
          <Separator $ml={7} />
          <ToolButton $w={27} $ml={3}><MarketWatchIcon /></ToolButton>
          <ToolButton $w={28}><CrosshairIcon /></ToolButton>
          <ToolButton $w={28}><FolderStarIcon /></ToolButton>
          <ToolButton $w={28}><NavigatorIcon /></ToolButton>
          <ToolButton $w={28}><TesterIcon /></ToolButton>
          <Separator $ml={2} />
          <TextButton $ml={9}>
            <NewOrderIcon />
            <ToolText>New Order</ToolText>
          </TextButton>
          <TextButton $ml={11}><WarningIcon /></TextButton>
          <TextButton $ml={11}>
            <ExpertIcon />
            <ToolText>Expert Advisors</ToolText>
          </TextButton>
        </Toolbar>
        <Toolbar $w={314} $h={27}>
          <ToolButton $w={23}><BarChartIcon /></ToolButton>
          <ToolButton $w={25} $pressed><CandleIcon /></ToolButton>
          <ToolButton $w={28} $ml={2}><LineIcon /></ToolButton>
          <Separator $ml={2} />
          <ToolButton $w={26} $ml={3}><ZoomIcon plus /></ToolButton>
          <ToolButton $w={26} $ml={2}><ZoomIcon /></ToolButton>
          <Separator $ml={4} />
          <ToolButton $w={25} $ml={4} $pressed><AutoScrollIcon /></ToolButton>
          <ToolButton $w={25} $ml={3} $pressed><ShiftIcon /></ToolButton>
          <Separator $ml={4} />
          <ToolButton $w={18} $ml={7}><IndicatorIcon /></ToolButton>
          <Caret />
          <ToolButton $w={18} $ml={9}><ClockIcon /></ToolButton>
          <Caret $ml={1} />
          <ToolButton $w={18} $ml={8}><TemplateIcon /></ToolButton>
          <Caret $ml={1} />
        </Toolbar>
        <Toolbar $w={318} $h={27}>
          <ToolButton $w={21} $pressed><CursorIcon /></ToolButton>
          <ToolButton $w={28}><CrossIcon /></ToolButton>
          <Separator $ml={4} />
          <ToolButton $w={28} $ml={3}><VLineIcon /></ToolButton>
          <ToolButton $w={28}><HLineIcon /></ToolButton>
          <ToolButton $w={28}><TrendIcon /></ToolButton>
          <ToolButton $w={28}>
            <ChannelIcon />
            <Glyph $size={8} $sub>E</Glyph>
          </ToolButton>
          <ToolButton $w={28}>
            <FiboIcon />
            <Glyph $size={8} $sub>F</Glyph>
          </ToolButton>
          <ToolButton $w={28}><Glyph $size={13} $weight={700}>A</Glyph></ToolButton>
          <ToolButton $w={28}>
            <TextBoxIcon><Glyph $size={11} $weight={700}>T</Glyph></TextBoxIcon>
          </ToolButton>
          <ToolButton $w={28}><ParallelIcon /></ToolButton>
          <ToolButton $w={22} $ml={3}><ArrowsIcon /></ToolButton>
          <Caret />
        </Toolbar>
        <Toolbar $w={247} $h={25} $last>
          <ToolButton $w={28} $ml={-7}><TimeframeText>M1</TimeframeText></ToolButton>
          <ToolButton $w={28}><TimeframeText>M5</TimeframeText></ToolButton>
          <ToolButton $w={28}><TimeframeText>M15</TimeframeText></ToolButton>
          <ToolButton $w={26} $ml={2} $pressed><TimeframeText>M30</TimeframeText></ToolButton>
          <ToolButton $w={28}><TimeframeText>H1</TimeframeText></ToolButton>
          <ToolButton $w={28}><TimeframeText>H4</TimeframeText></ToolButton>
          <ToolButton $w={28}><TimeframeText>D1</TimeframeText></ToolButton>
          <ToolButton $w={28}><TimeframeText>W1</TimeframeText></ToolButton>
          <ToolButton $w={28}><TimeframeText>MN</TimeframeText></ToolButton>
        </Toolbar>
      </ToolbarStack>

      <ChartBoard>
        <Pane $mb={1}>
          <Plot><MainPlot /></Plot>
          <MainAxis />
        </Pane>
        <Pane $mb={1}>
          <Plot><MacdPlot /></Plot>
          <MacdAxis />
        </Pane>
        <Pane $mb={1}>
          <Plot><VolumePlot /></Plot>
          <VolumeAxis />
        </Pane>
        <Pane>
          <Plot><RsiPlot /></Plot>
          <RsiAxis />
        </Pane>
        <TimeAxis />
      </ChartBoard>

      <TabStrip>
        <TabEdge $w={72} $pad={2}>EURUSD,H1</TabEdge>
        <TabEdge $w={80}>EURUSD,H4</TabEdge>
        <TabEdge $w={88}>EURUSD,Daily</TabEdge>
        <TabEdge $w={88}>EURUSD,Daily</TabEdge>
        <TabEdge $w={100}>EURUSD,Weekly</TabEdge>
        <TabEdge $w={104}>EURUSD,Monthly</TabEdge>
        <Tab $w={79}>GBPUSD,M5</Tab>
        <Tab $w={85} $active>GBPUSD,M30</Tab>
        <TabEdge $w={80} $pad={10}>GBPUSD,H1</TabEdge>
        <TabEdge $w={80} $pad={10}>GBPUSD,H4</TabEdge>
        <TabEdge $w={88}>GBPUSD,Daily</TabEdge>
        <Tab $w={23}>GBPUSD,H1</Tab>
        <TabArrows>
          <ArrowLeft />
          <ArrowRight />
        </TabArrows>
      </TabStrip>

      <StatusBar>
        <StatusCell $w={283} $flush>
          <ClippedText>For Help, press F1</ClippedText>
        </StatusCell>
        <StatusCell $w={109}>Default</StatusCell>
        <StatusCell $w={101}>2011.06.21 16:00</StatusCell>
        <StatusCell $w={71}>O: 1.62085</StatusCell>
        <StatusCell $w={72}>H: 1.62262</StatusCell>
        <StatusCell $w={69}>L: 1.62031</StatusCell>
        <StatusCell $w={71}>C: 1.62202</StatusCell>
        <StatusCell $w={66}>V: 2657</StatusCell>
        <ConnectionBars>
          <Ico width="25" height="14" viewBox="0 0 25 14">
            {Array.from({ length: BAR_COUNT }).map((_, i) => (
              <g key={i}>
                <rect x={i * 2} y={5 - i * 0.4} width="1" height={4} fill="#6a8a1a" />
                <rect x={i * 2} y="9" width="1" height="5" fill="#0f4a6a" />
              </g>
            ))}
          </Ico>
        </ConnectionBars>
        <KbText>1054/1 kb</KbText>
        <Grip width="12" height="12" viewBox="0 0 12 12">
          <path d="M12 1L1 12M12 5L5 12M12 9L9 12" stroke="#aca899" strokeWidth="1.3" />
        </Grip>
      </StatusBar>
    </Frame>
  );
};

export default App;
